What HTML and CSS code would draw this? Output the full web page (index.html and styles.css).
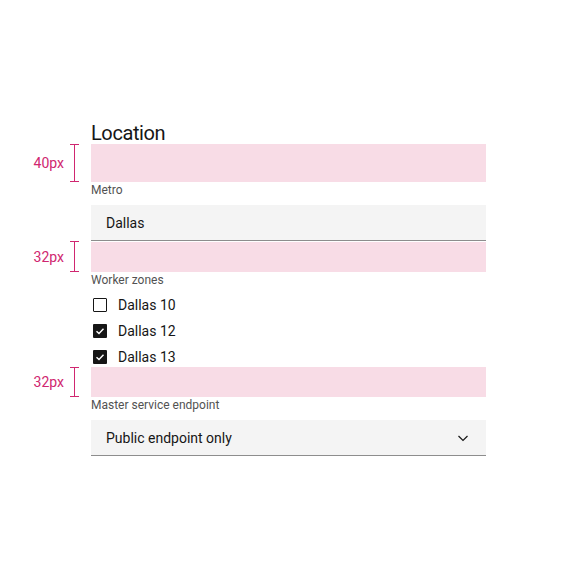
FILE: index.html
```html
<!DOCTYPE html>
<html>
<head>
<meta charset="utf-8">
<link rel="stylesheet" href="styles.css">
</head>
<body>
<div class="page">
  <div class="grid">
    <div class="gutter"></div>
    <h2 class="title">Location</h2>

    <div class="gutter spec">
      <span class="spec-label">40px</span>
      <span class="ruler"></span>
    </div>
    <div class="pink pink-40"></div>

    <div class="gutter"></div>
    <div class="label">Metro</div>

    <div class="gutter"></div>
    <div class="field">Dallas</div>

    <div class="gutter spec spec-32">
      <span class="spec-label">32px</span>
      <span class="ruler"></span>
    </div>
    <div class="pink pink-32 pink-after-field"></div>

    <div class="gutter"></div>
    <div class="label">Worker zones</div>

    <div class="gutter"></div>
    <div class="checks">
      <label class="check"><span class="box"></span><span>Dallas 10</span></label>
      <label class="check"><span class="box checked"><svg viewBox="0 0 14 14" width="14" height="14"><path d="M3.5 7.2 L6 9.6 L10.5 4.8" fill="none" stroke="#fff" stroke-width="1.4"/></svg></span><span>Dallas 12</span></label>
      <label class="check"><span class="box checked"><svg viewBox="0 0 14 14" width="14" height="14"><path d="M3.5 7.2 L6 9.6 L10.5 4.8" fill="none" stroke="#fff" stroke-width="1.4"/></svg></span><span>Dallas 13</span></label>
    </div>

    <div class="gutter spec spec-32">
      <span class="spec-label">32px</span>
      <span class="ruler"></span>
    </div>
    <div class="pink pink-32"></div>

    <div class="gutter"></div>
    <div class="label">Master service endpoint</div>

    <div class="gutter"></div>
    <div class="field select">
      <span>Public endpoint only</span>
      <svg class="chev" viewBox="0 0 16 16" width="16" height="16"><path d="M3.5 6 L8 10.5 L12.5 6" fill="none" stroke="#161616" stroke-width="1.2"/></svg>
    </div>
  </div>
</div>
</body>
</html>
```
FILE: styles.css
```css
* { box-sizing: border-box; }
html, body { margin: 0; padding: 0; background: #fff; }
body {
  font-family: Roboto, "Noto Sans", sans-serif;
  color: #161616;
  width: 576px;
  height: 576px;
}
.page { padding-top: 120px; }
.grid {
  display: grid;
  grid-template-columns: 91px 395px;
}
.title {
  margin: 0;
  font-size: 20px;
  font-weight: 400;
  line-height: 24px;
  height: 24px;
  padding-top: 1px;
  color: #161616;
  letter-spacing: -0.4px;
}
.pink { background: #f8dce6; }
.pink-40 { height: 38px; }
.pink-32 { height: 30px; }
.pink-after-field { margin-top: 1px; }
.spec {
  display: flex;
  justify-content: flex-end;
  align-items: center;
  gap: 6px;
  padding-right: 12px;
}
.spec-label {
  color: #d02670;
  font-size: 14px;
  line-height: 16px;
}
.ruler {
  align-self: stretch;
  width: 9px;
  position: relative;
  border-top: 1px solid #d02670;
  border-bottom: 1px solid #d02670;
}
.ruler::before {
  content: "";
  position: absolute;
  left: 4px;
  top: 0;
  bottom: 0;
  width: 1px;
  background: #d02670;
}
.label {
  font-size: 12px;
  line-height: 16px;
  color: #525252;
  margin-bottom: 7px;
}
.field {
  height: 36px;
  background: #f4f4f4;
  border-bottom: 1px solid #8d8d8d;
  font-size: 14px;
  display: flex;
  align-items: center;
  padding: 1px 16px 0 15px;
}
.select { justify-content: space-between; padding-right: 15px; }
.checks {
  display: flex;
  flex-direction: column;
  gap: 6px;
}
.check {
  display: flex;
  align-items: center;
  height: 20px;
  font-size: 14px;
  gap: 11px;
  padding-left: 2px;
}
.box {
  width: 14px;
  height: 14px;
  border: 1px solid #161616;
  border-radius: 1px;
  display: inline-flex;
}
.box.checked {
  background: #161616;
  border: none;
}
```
